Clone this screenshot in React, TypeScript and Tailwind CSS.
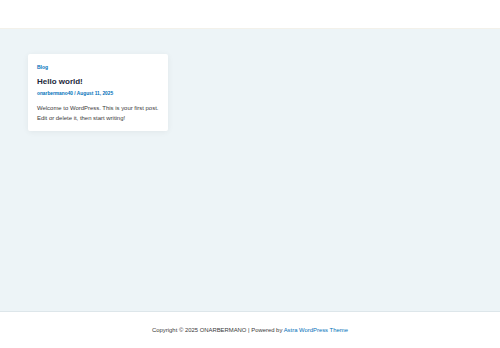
export default function App() {
  return (
    <div className="flex h-[348px] w-[500px] flex-col bg-white" style={{ fontFamily: '"Liberation Sans", Arial, sans-serif' }}>
      <header className="h-[29px] shrink-0 border-b border-[#f3f1ea] bg-white" />
      <main className="flex-1 bg-[#edf4f7] px-[28px] pt-[25px]">
        <article className="w-[140px] rounded-[2px] bg-white px-[9px] pt-[10px] pb-[8px] shadow-[0_1px_6px_rgba(0,0,0,0.06)]">
          <div className="text-[5px] font-bold leading-[6px] text-[#0170b9]">Blog</div>
          <h2 className="mt-[7px] text-[8px] font-bold leading-[10px] text-[#1e293b]">Hello world!</h2>
          <div className="mt-[4px] text-[4.8px] font-bold leading-[6px] text-[#0170b9]">onarbermano40 / August 11, 2025</div>
          <p className="mt-[6px] w-[126px] text-[5.95px] leading-[10px] text-[#3a3a3a]">
            Welcome to WordPress. This is your first post. Edit or delete it, then start writing!
          </p>
        </article>
      </main>
      <footer className="flex h-[37px] shrink-0 items-center justify-center border-t border-[#dde6ea] bg-white">
        <p className="text-[5.9px] text-[#3a3a3a]">
          Copyright © 2025 ONARBERMANO | Powered by <span className="text-[#0170b9]">Astra WordPress Theme</span>
        </p>
      </footer>
    </div>
  );
}
